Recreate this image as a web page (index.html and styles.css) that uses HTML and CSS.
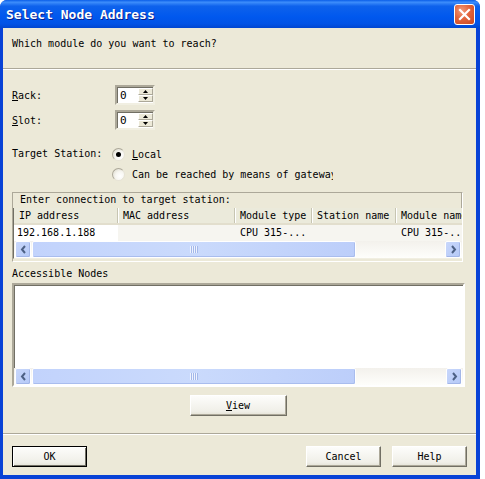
FILE: index.html
```html
<!DOCTYPE html>
<html>

<head>
    <meta charset="utf-8">
    <title>Select Node Address</title>
    <link rel="stylesheet" href="styles.css">
</head>

<body>
    <div class="window">
        <div class="titlebar">
            <span class="title">Select Node Address</span>
            <span class="close">
                <svg width="13" height="13" viewBox="0 0 13 13">
                    <path d="M2 2 L11 11 M11 2 L2 11" stroke="#fff" stroke-width="2.2" stroke-linecap="square" />
                </svg>
            </span>
        </div>
        <div class="body">
            <div class="prompt">Which module do you want to reach?</div>
            <div class="sep"></div>

            <div class="field field-first">
                <div class="label"><u>R</u>ack:</div>
                <div class="spin">
                    <span class="spin-value">0</span>
                    <span class="spin-btns">
                        <span class="spin-btn"><svg width="5" height="3" viewBox="0 0 5 3"><path d="M2.5 0 L5 3 L0 3 Z" fill="#000" /></svg></span>
                        <span class="spin-btn"><svg width="5" height="3" viewBox="0 0 5 3"><path d="M0 0 L5 0 L2.5 3 Z" fill="#000" /></svg></span>
                    </span>
                </div>
            </div>
            <div class="field">
                <div class="label"><u>S</u>lot:</div>
                <div class="spin">
                    <span class="spin-value">0</span>
                    <span class="spin-btns">
                        <span class="spin-btn"><svg width="5" height="3" viewBox="0 0 5 3"><path d="M2.5 0 L5 3 L0 3 Z" fill="#000" /></svg></span>
                        <span class="spin-btn"><svg width="5" height="3" viewBox="0 0 5 3"><path d="M0 0 L5 0 L2.5 3 Z" fill="#000" /></svg></span>
                    </span>
                </div>
            </div>

            <div class="target">
                <div class="target-label">Target Station:</div>
                <div class="radios">
                    <div class="radio-row"><span class="radio checked"></span><span><u>L</u>ocal</span></div>
                    <div class="radio-row"><span class="radio"></span><span class="clip">Can be reached by means of gateway</span></div>
                </div>
            </div>

            <div class="conn">
                <div class="conn-caption">Enter connection to target station:</div>
                <div class="list">
                    <div class="list-head">
                        <div class="col c1">IP address</div>
                        <div class="col c2">MAC address</div>
                        <div class="col c3">Module type</div>
                        <div class="col c4">Station name</div>
                        <div class="col c5">Module name</div>
                    </div>
                    <div class="list-row">
                        <div class="cell c1 first">192.168.1.188</div>
                        <div class="cell c2"></div>
                        <div class="cell c3">CPU 315-...</div>
                        <div class="cell c4"></div>
                        <div class="cell c5">CPU 315-..</div>
                    </div>
                    <div class="hscroll">
                        <span class="sb-btn"><svg width="7" height="9" viewBox="0 0 7 9"><path d="M5 1 L2 4.5 L5 8" stroke="#4d6185" stroke-width="2" fill="none" /></svg></span>
                        <span class="sb-thumb" style="width: 324px"><span class="grip"></span></span>
                        <span class="sb-track"></span>
                        <span class="sb-btn"><svg width="7" height="9" viewBox="0 0 7 9"><path d="M2 1 L5 4.5 L2 8" stroke="#4d6185" stroke-width="2" fill="none" /></svg></span>
                    </div>
                </div>
            </div>

            <div class="nodes-label">Accessible Nodes</div>
            <div class="nodes">
                <div class="nodes-area"></div>
                <div class="hscroll">
                    <span class="sb-btn"><svg width="7" height="9" viewBox="0 0 7 9"><path d="M5 1 L2 4.5 L5 8" stroke="#4d6185" stroke-width="2" fill="none" /></svg></span>
                    <span class="sb-thumb" style="width: 324px"><span class="grip"></span></span>
                    <span class="sb-track"></span>
                    <span class="sb-btn"><svg width="7" height="9" viewBox="0 0 7 9"><path d="M2 1 L5 4.5 L2 8" stroke="#4d6185" stroke-width="2" fill="none" /></svg></span>
                </div>
            </div>

            <div class="view-row">
                <div class="btn btn-view"><u>V</u>iew</div>
            </div>
            <div class="sep sep-bottom"></div>

            <div class="actions">
                <div class="btn default">OK</div>
                <div class="spacer"></div>
                <div class="btn">Cancel</div>
                <div class="btn">Help</div>
            </div>
        </div>
    </div>
</body>

</html>
```

FILE: styles.css
```css
* {
    box-sizing: border-box;
}

body {
    margin: 0;
    background: #fff;
    font-family: "DejaVu Sans Mono", "Liberation Mono", monospace;
    font-size: 10px;
    color: #000;
}

u {
    text-decoration: underline;
    text-underline-offset: 1px;
}

.window {
    width: 480px;
    height: 479px;
    display: flex;
    flex-direction: column;
    background: #0842d6;
    border-radius: 7px 7px 0 0;
    overflow: hidden;
}

.titlebar {
    height: 28px;
    flex: none;
    display: flex;
    align-items: center;
    padding: 0 5px 0 6px;
    background: linear-gradient(#0a5ee8 0%, #3d8dfb 8%, #0e62ec 22%, #0058ee 60%, #0153e6 85%, #0046d0 100%);
}

.title {
    flex: 1;
    color: #fff;
    font-weight: bold;
    font-size: 13px;
    padding-top: 1px;
    text-shadow: 1px 1px #0a1e8c;
}

.close {
    width: 21px;
    height: 21px;
    border: 1px solid #fff;
    border-radius: 3px;
    background: radial-gradient(circle at 35% 30%, #f29a7a 0%, #e2643c 45%, #c8461f 100%);
    display: flex;
    align-items: center;
    justify-content: center;
}

.body {
    flex: 1;
    margin: 0 4px 4px 3px;
    background: #ece9d8;
    padding: 0 9px;
}

.prompt {
    height: 40px;
    padding-top: 10px;
    line-height: 12px;
}

.sep {
    height: 2px;
    margin: 0 -9px;
    border-top: 1px solid #aca899;
    border-bottom: 1px solid #fff;
}

.field {
    display: flex;
    align-items: center;
    height: 20px;
    margin-top: 5px;
}

.field-first {
    margin-top: 15px;
}

.label {
    width: 103px;
}

.spin {
    width: 40px;
    height: 20px;
    display: flex;
    background: #fff;
    border: 2px solid;
    border-color: #aca899 #f1efe2 #f1efe2 #aca899;
    box-shadow: inset 1px 1px #716f64;
}

.spin-value {
    flex: 1;
    padding: 2px 0 0 3px;
    font-size: 11px;
}

.spin-btns {
    width: 15px;
    display: flex;
    flex-direction: column;
    padding: 1px 0;
}

.spin-btn {
    flex: 1;
    display: flex;
    align-items: center;
    justify-content: center;
    background: #ece9d8;
    border: 1px solid;
    border-color: #fff #aca899 #aca899 #fff;
}

.target {
    display: flex;
    margin-top: 16px;
}

.target-label {
    width: 100px;
    line-height: 16px;
}

.radios {
    display: flex;
    flex-direction: column;
    gap: 4px;
}

.radio-row {
    display: flex;
    align-items: center;
    gap: 7px;
    height: 16px;
}

.radio {
    width: 13px;
    height: 13px;
    border-radius: 50%;
    border: 1px solid;
    border-color: #aca899 #e6e3d6 #e6e3d6 #aca899;
    background: radial-gradient(circle at 65% 65%, #fff 0%, #f7f6f1 45%, #d6d3c4 100%);
    display: flex;
    align-items: center;
    justify-content: center;
}

.radio.checked::after {
    content: "";
    width: 5px;
    height: 5px;
    border-radius: 50%;
    background: #000;
}

.clip {
    width: 201px;
    overflow: hidden;
    white-space: nowrap;
}

.conn {
    margin-top: 10px;
    width: 451px;
    height: 70px;
    border: 1px solid;
    border-color: #aca899 #fff #fff #aca899;
}

.conn-caption {
    height: 15px;
    line-height: 14px;
    padding-left: 7px;
    border-right: 1px solid #aca899;
}

.list {
    border-left: 1px solid #716f64;
    border-bottom: 1px solid #f1efe2;
}

.list-head,
.list-row {
    display: flex;
    overflow: hidden;
    white-space: nowrap;
}

.list-head {
    height: 17px;
    background: #ebeadb;
    border-bottom: 2px solid #e2decd;
}

.col {
    line-height: 15px;
    padding-left: 5px;
    border-right: 1px solid #c7c5b2;
    box-shadow: 1px 0 #fff;
    overflow: hidden;
    flex: none;
}

.c1 { width: 104px; }
.c2 { width: 117px; }
.c3 { width: 77px; }
.c4 { width: 84px; }
.c5 { width: 67px; border-right: 0; }

.list-row {
    height: 16px;
    background: #f6f5f0;
}

.cell {
    line-height: 16px;
    padding-left: 5px;
    flex: none;
    overflow: hidden;
}

.cell.first {
    background: #fff;
    padding-left: 3px;
}

.hscroll {
    height: 17px;
    display: flex;
    background: linear-gradient(#f3f1ec, #fefefb);
    padding: 0 1px;
}

.sb-btn {
    width: 16px;
    height: 17px;
    flex: none;
    display: flex;
    align-items: center;
    justify-content: center;
    border: 1px solid #fff;
    border-radius: 2px;
    background: linear-gradient(135deg, #c8d7fb, #b5c9f7);
    box-shadow: inset -1px -1px #a2b6e8;
}

.sb-thumb {
    flex: none;
    height: 17px;
    margin-left: 1px;
    border: 1px solid #fff;
    border-radius: 2px;
    background: linear-gradient(90deg, #c2d3fc, #cadafc 50%, #bccefa);
    box-shadow: inset -1px -1px #a9bdee;
    display: flex;
    align-items: center;
    justify-content: center;
}

.grip {
    width: 8px;
    height: 7px;
    background: repeating-linear-gradient(90deg, #eef3fe 0 1px, #a4b8ea 1px 2px);
}

.sb-track {
    flex: 1;
}

.nodes-label {
    margin-top: 6px;
    height: 12px;
    line-height: 12px;
}

.nodes {
    margin-top: 3px;
    width: 453px;
    height: 104px;
    display: flex;
    flex-direction: column;
    background: #fff;
    border: 2px solid;
    border-color: #aca899 #fff #fff #aca899;
    box-shadow: inset 1px 1px #716f64;
}

.nodes-area {
    flex: 1;
}

.nodes .hscroll {
    padding-left: 1px;
}

.view-row {
    display: flex;
    justify-content: center;
    margin-top: 8px;
    padding-right: 3px;
}

.btn {
    width: 75px;
    height: 21px;
    line-height: 19px;
    text-align: center;
    background: linear-gradient(#fdfdfb, #f0efe8 80%, #e4e2d6);
    border: 1px solid;
    border-color: #fff #716f64 #716f64 #fff;
    box-shadow: inset -1px -1px #aca899;
}

.btn-view {
    width: 97px;
}

.btn.default {
    border: 1px solid #000;
    box-shadow: inset 1px 1px #fff, inset -1px -1px #716f64;
}

.sep-bottom {
    margin-top: 17px;
}

.actions {
    display: flex;
    gap: 11px;
    margin-top: 11px;
}

.spacer {
    flex: 1;
}
```
